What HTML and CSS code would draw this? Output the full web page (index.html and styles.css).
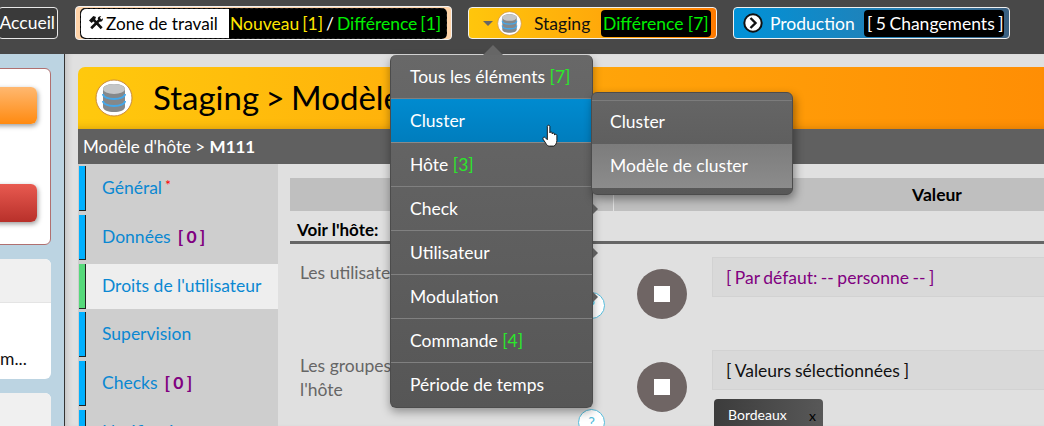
FILE: index.html
```html
<!DOCTYPE html>
<html lang="fr">

<head>
    <meta charset="UTF-8">
    <title>Staging</title>
    <link rel="stylesheet" href="styles.css">
</head>

<body>
    <svg width="0" height="0" class="defs">
        <symbol id="db" viewBox="0 0 38 38">
            <circle cx="19" cy="19" r="18" fill="#fff" stroke="#c98a3a" stroke-width="1"/>
            <path d="M8 10c0-3 5-5 11-5s11 2 11 5v18c0 3-5 5-11 5s-11-2-11-5z" fill="#85888a"/>
            <ellipse cx="19" cy="10" rx="11" ry="5" fill="#c4c6c8"/>
            <path d="M8 15c0 3 5 5 11 5s11-2 11-5" fill="none" stroke="#45a8ea" stroke-width="2"/>
            <path d="M8 22c0 3 5 5 11 5s11-2 11-5" fill="none" stroke="#45a8ea" stroke-width="2"/>
        </symbol>
    </svg>

    <header class="topbar">
        <a class="home">Accueil</a>

        <div class="env env-work">
            <div class="work-inner">
                <span class="work-label">
                    <svg class="tools" viewBox="0 0 16 16" width="14" height="14">
                        <path d="M4 3l10.500 11M12.500 4L2.500 14" fill="none" stroke="#111" stroke-width="3"/>
                        <path d="M0 5l5-5 3 1-1 3-4 4z" fill="#111"/>
                        <path d="M10 3c0-2 2-3 4-3l-1.500 2 1.500 2 2-1.500c0 2-1 4-3 4z" fill="#111"/>
                    </svg>
                    Zone de travail
                </span>
                <span class="counts"><span class="new">Nouveau [1]</span> / <span class="diff">Différence [1]</span></span>
            </div>
        </div>

        <div class="env env-staging">
            <span class="caret"></span>
            <svg class="db-small"><use href="#db"/></svg>
            <span class="env-name">Staging</span>
            <span class="counts diff">Différence [7]</span>
        </div>

        <div class="env env-prod">
            <svg class="chevron" viewBox="0 0 20 20" width="20" height="20">
                <circle cx="10" cy="10" r="8.700" fill="#fff" stroke="#111" stroke-width="2"/>
                <path d="M7.500 5l5 5-5 5" fill="none" stroke="#111" stroke-width="2.400"/>
            </svg>
            <span class="env-name">Production</span>
            <span class="counts">[ 5 Changements ]</span>
        </div>
    </header>

    <div class="layout">
        <aside class="side">
            <div class="card card-actions">
                <div class="side-btn orange"></div>
                <div class="side-btn red"></div>
            </div>
            <div class="card card-list">
                <div class="card-head"></div>
                <div class="card-text">m...</div>
            </div>
            <div class="card card-list">
                <div class="card-head"></div>
            </div>
        </aside>

        <main class="main">
            <div class="banner">
                <svg class="db-big"><use href="#db"/></svg>
                <h1>Staging &gt; Modèle d'hôte</h1>
            </div>
            <div class="crumb">Modèle d'hôte &gt; <b>M111</b></div>

            <div class="panel">
                <nav class="tabs">
                    <a class="tab">Général<sup class="star">*</sup></a>
                    <a class="tab">Données <span class="num">[ 0 ]</span></a>
                    <a class="tab active">Droits de l'utilisateur</a>
                    <a class="tab">Supervision</a>
                    <a class="tab">Checks <span class="num">[ 0 ]</span></a>
                    <a class="tab">Notifications</a>
                </nav>

                <section class="content">
                    <div class="table-head">
                        <div class="col-name"></div>
                        <div class="col-value">Valeur</div>
                    </div>
                    <div class="group-title">Voir l'hôte:</div>

                    <div class="row">
                        <div class="row-label">Les utilisateurs de l'hôte<span class="help">?</span></div>
                        <div class="stop"><span></span></div>
                        <div class="row-value"><div class="value-box default">[ Par défaut: -- personne -- ]</div></div>
                    </div>

                    <div class="row">
                        <div class="row-label">Les groupes de contacts de<br>l'hôte<span class="help">?</span></div>
                        <div class="stop"><span></span></div>
                        <div class="row-value">
                            <div class="value-box">[ Valeurs sélectionnées ]</div>
                            <div class="tag">Bordeaux <i>x</i></div>
                        </div>
                    </div>
                </section>
            </div>
        </main>
    </div>

    <!-- menus ouverts par dessus la page -->
    <div class="menu">
        <a class="item">Tous les éléments <em>[7]</em></a>
        <a class="item hover">Cluster
            <svg class="hand" viewBox="0 0 16 22" width="17" height="24">
                <path d="M5 2c0-1.500 2.400-1.500 2.400 0v6c0-1 2.200-1 2.200 0v1c0-1 2.200-1 2.200 0v1c0-.8 2.200-.8 2.200.2v5c0 2.500-1.500 5-3 5.300H7c-1.500 0-2.500-1-3.200-2.300L1 14c-.8-1.500 1-2.600 2-1.500l2 2z" fill="#fff" stroke="#111" stroke-width=".9"/>
            </svg>
        </a>
        <a class="item">Hôte <em>[3]</em></a>
        <a class="item more">Check</a>
        <a class="item more">Utilisateur</a>
        <a class="item more">Modulation</a>
        <a class="item">Commande <em>[4]</em></a>
        <a class="item">Période de temps</a>
    </div>

    <div class="menu submenu">
        <a class="item">Cluster</a>
        <a class="item current">Modèle de cluster</a>
    </div>
</body>

</html>
```
FILE: styles.css
```css
html,
body {
    margin: 0;
    height: 426px;
    overflow: hidden;
}

body {
    font-family: Lato, "Open Sans", sans-serif;
    font-size: 17.5px;
    color: #111;
    background-color: #e0e0e0;
    position: relative;
}

.defs {
    position: absolute;
}

/* top bar */
.topbar {
    height: 54px;
    box-sizing: border-box;
    background-color: #484848;
    padding-top: 7px;
    display: flex;
    align-items: flex-start;
}

.home {
    width: 60px;
    height: 32px;
    margin-left: -2px;
    margin-right: 17px;
    box-sizing: border-box;
    border: 1px solid #e8e8e8;
    border-radius: 4px;
    background-color: #3a3a3a;
    color: #fff;
    line-height: 30px;
    text-align: right;
    padding-right: 2px;
}

.env {
    height: 32px;
    box-sizing: border-box;
    border: 1px solid #f0f0f0;
    border-radius: 4px;
    display: flex;
    align-items: center;
    margin-right: 16px;
}

.env-work {
    width: 377px;
    height: 34px;
    margin-top: -1px;
    padding: 0 4px;
    background-color: #ffd3a8;
}

.work-inner {
    flex: 1;
    height: 31px;
    display: flex;
    box-sizing: border-box;
    border: 1px dashed #222;
    border-radius: 5px;
    background-color: #000;
}

.work-label {
    width: 148px;
    box-sizing: border-box;
    padding-left: 8px;
    background-color: #fff;
    border-radius: 5px 0 0 5px;
    color: #000;
    font-size: 17.200px;
    display: flex;
    align-items: center;
    gap: 3px;
    white-space: nowrap;
}

.tools {
    flex-shrink: 0;
}

.counts {
    height: 27px;
    line-height: 27px;
    background-color: #000;
    color: #fff;
    border-radius: 4px;
    white-space: nowrap;
}

.env-work .counts {
    flex: 1;
    height: 29px;
    line-height: 29px;
    padding-left: 1px;
    word-spacing: -1.500px;
}

.new {
    color: #ffe600;
}

.diff {
    color: #00f000;
}

.env-staging {
    width: 249px;
    background: linear-gradient(to right, #ffc60c, #ffa50a 60%, #ff7a00);
}

.caret {
    width: 0;
    height: 0;
    margin-left: 14px;
    border-left: 5px solid transparent;
    border-right: 5px solid transparent;
    border-top: 5px solid #666;
}

.db-small {
    width: 25px;
    height: 25px;
    margin-left: 4px;
}

.env-staging .env-name {
    margin-left: 12px;
    width: 67px;
    color: #111;
}

.env-staging .counts {
    width: 110px;
    padding-left: 2px;
    box-sizing: border-box;
}

.env-prod {
    width: 277px;
    background: linear-gradient(to right, #0092d8, #2b7cae 70%, #3a5f80);
}

.chevron {
    margin-left: 9px;
}

.env-prod .env-name {
    color: #fff;
    margin-left: 7px;
    width: 94px;
}

.env-prod .counts {
    width: 140px;
    padding-left: 3px;
    box-sizing: border-box;
    word-spacing: -1px;
}

/* page */
.layout {
    display: flex;
    height: 372px;
}

.side {
    width: 64px;
    flex-shrink: 0;
    box-sizing: border-box;
    padding-top: 14px;
    background-color: #bcd4e2;
    overflow: hidden;
}

.card {
    width: 61px;
    margin-left: -10px;
    margin-bottom: 14px;
    box-sizing: border-box;
    background-color: #fff;
    border-radius: 6px;
}

.card-actions {
    height: 177px;
    border: 1px solid #b07070;
    padding-top: 18px;
}

.side-btn {
    width: 46px;
    height: 37px;
    border-radius: 6px;
    box-shadow: 1px 2px 5px rgba(0, 0, 0, .4);
}

.orange {
    background: linear-gradient(#ffb870, #ff8a10);
    margin-bottom: 60px;
}

.red {
    height: 38px;
    background: linear-gradient(#e85a50, #b8302a);
}

.card-list {
    height: 120px;
}

.card-head {
    height: 43px;
    background-color: #f0f0f0;
    border-radius: 6px 6px 0 0;
    border-bottom: 1px solid #e4e4e4;
}

.card-text {
    padding: 46px 0 0 10px;
    line-height: 20px;
}

.main {
    flex: 1;
    min-width: 0;
    border-left: 1px solid #333;
    padding: 13px 0 0 13px;
    box-shadow: inset 6px 0 6px -4px rgba(0, 0, 0, .15);
}

.banner {
    height: 62px;
    box-sizing: border-box;
    display: flex;
    align-items: center;
    padding-left: 17px;
    border-radius: 7px 0 0 0;
    background: linear-gradient(to right, #ffc90d, #ffa60a 50%, #ff8e04);
    box-shadow: inset 0 -8px 8px -8px rgba(120, 70, 0, .35);
}

.db-big {
    width: 38px;
    height: 38px;
}

.banner h1 {
    margin: 0 0 2px 20px;
    font-size: 33px;
    font-weight: normal;
    color: #000;
    white-space: nowrap;
    word-spacing: -2px;
}

.crumb {
    height: 35px;
    line-height: 35px;
    box-sizing: border-box;
    padding-left: 5px;
    background-color: #606060;
    color: #fff;
    font-size: 17px;
}

.panel {
    display: flex;
}

/* tabs */
.tabs {
    width: 200px;
    flex-shrink: 0;
    height: 262px;
    overflow: hidden;
    padding: 2px 0 0 1px;
    box-sizing: border-box;
    background-color: #cecece;
    display: flex;
    flex-direction: column;
    gap: 3.750px;
}

.tab {
    flex-shrink: 0;
    height: 45px;
    display: flex;
    line-height: 44px;
    color: #0a88d2;
    white-space: nowrap;
}

.tab::before {
    content: "";
    width: 6px;
    margin-right: 16px;
    flex-shrink: 0;
    background-color: #00b0ff;
    border-right: 1px solid #222;
    border-bottom: 1px solid #222;
}

.tab.active {
    background-color: #eee;
}

.tab.active::before {
    background-color: #55d97a;
}

.star {
    color: #f00;
    font-size: 14px;
    line-height: 38px;
    margin-left: 3px;
}

.num {
    color: #800080;
    font-weight: bold;
    margin-left: 7px;
    word-spacing: -1px;
    white-space: pre;
}

/* content */
.content {
    flex: 1;
    min-width: 0;
    overflow: hidden;
    padding: 14px 0 0 12px;
}

.table-head {
    height: 33px;
    display: flex;
    background-color: #bfbfbf;
    font-weight: bold;
    color: #000;
    line-height: 34px;
    text-align: center;
}

.col-name {
    width: 323px;
    flex-shrink: 0;
    border-right: 1px solid #e0e0e0;
}

.col-value {
    width: 646px;
    flex-shrink: 0;
}

.group-title {
    height: 33px;
    box-sizing: border-box;
    padding: 8px 0 0 7px;
    line-height: 22px;
    font-weight: bold;
    font-size: 17px;
    color: #000;
    border-bottom: 3px solid #666;
}

.row {
    display: flex;
    height: 93px;
    padding-top: 13px;
    box-sizing: border-box;
}

.row-label {
    width: 347px;
    flex-shrink: 0;
    box-sizing: border-box;
    padding: 4px 0 0 10px;
    color: #666;
    line-height: 24px;
    white-space: nowrap;
}

.help {
    display: block;
    width: 27px;
    height: 27px;
    margin: 7px 0 0 278px;
    box-sizing: border-box;
    border: 1px solid #55bcdc;
    border-radius: 50%;
    background-color: #fff;
    color: #55bcdc;
    text-align: center;
    line-height: 25px;
    font-size: 15px;
}

.stop {
    width: 50px;
    height: 50px;
    flex-shrink: 0;
    margin-top: 12px;
    border-radius: 50%;
    background-color: #6f6564;
    display: flex;
    align-items: center;
    justify-content: center;
}

.stop span {
    width: 16px;
    height: 16px;
    background-color: #fff;
}

.row-value {
    flex: 1;
    margin-left: 25px;
    min-width: 0;
}

.value-box {
    height: 40px;
    box-sizing: border-box;
    border: 1px solid #d2d2d2;
    border-right: 0;
    background-color: #d9d9d9;
    padding-left: 13px;
    line-height: 40px;
    color: #111;
    word-spacing: -.5px;
}

.value-box.default {
    color: #800080;
    word-spacing: -1px;
}

.tag {
    width: 109px;
    height: 40px;
    margin: 9px 0 0 2px;
    box-sizing: border-box;
    border-radius: 4px;
    background: linear-gradient(to right, #3c3c3c, #585858);
    color: #fff;
    font-size: 14px;
    line-height: 32px;
    padding-left: 14px;
    position: relative;
}

.tag i {
    position: absolute;
    right: 7px;
    top: 1px;
    color: #000;
    font-style: normal;
}

/* dropdown menus */
.menu {
    position: absolute;
    left: 390px;
    top: 55px;
    width: 203px;
    box-sizing: border-box;
    border-radius: 6px;
    border: 1px solid #4c4c4c;
    border-top: 0;
    background: linear-gradient(#686868, #565656);
    box-shadow: 0 4px 10px rgba(0, 0, 0, .35);
}

.menu::before {
    content: "";
    position: absolute;
    left: 92px;
    top: -10px;
    border-left: 10px solid transparent;
    border-right: 10px solid transparent;
    border-bottom: 10px solid #666;
}

.item {
    display: block;
    height: 44px;
    box-sizing: border-box;
    border-bottom: 1px solid #808080;
    padding-left: 19px;
    line-height: 44px;
    color: #fff;
    position: relative;
    white-space: nowrap;
}

.item:last-child {
    border-bottom: 0;
}

.item em {
    font-style: normal;
    color: #2be82b;
}

.item.hover {
    background: linear-gradient(#008bd0, #007dbd);
    border-bottom-color: #8a8a8a;
}

.item.more::after {
    content: "";
    position: absolute;
    right: -6px;
    top: 17px;
    border-top: 5px solid transparent;
    border-bottom: 5px solid transparent;
    border-left: 5px solid #5c5c5c;
}

.hand {
    position: absolute;
    left: 151px;
    top: 25px;
}

.submenu {
    left: 591px;
    top: 92px;
    padding: 7px 0 6px;
    width: 202px;
    border-top: 1px solid #4c4c4c;
    background: linear-gradient(#666, #585858);
    box-shadow: 2px 4px 10px rgba(0, 0, 0, .4);
    z-index: 2;
}

.submenu::before {
    display: none;
}

.submenu .item {
    padding-left: 18px;
    border-top: 1px solid #7c7c7c;
    border-bottom: 0;
    line-height: 41px;
}

.submenu .current {
    border-top: 0;
    line-height: 43px;
    background: linear-gradient(#7c7c7c, #8c8c8c);
}
```
